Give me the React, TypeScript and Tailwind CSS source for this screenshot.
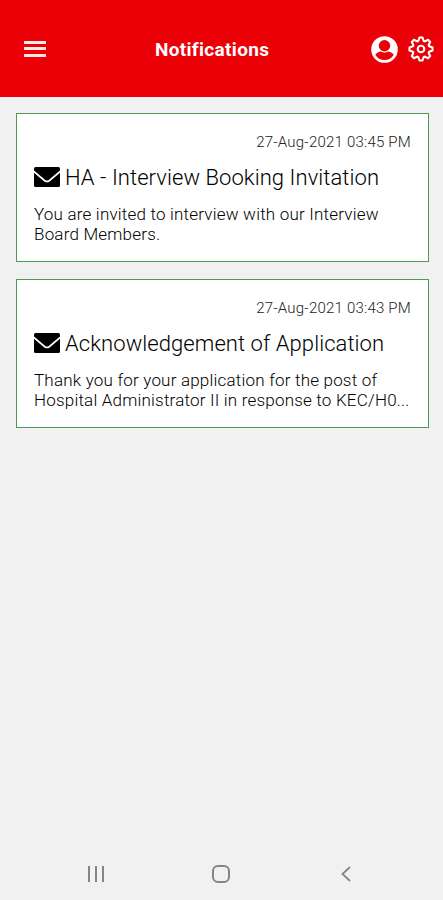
import React from 'react';

const NOTIFICATIONS = [
  {
    id: 1,
    date: '27-Aug-2021 03:45 PM',
    title: 'HA - Interview Booking Invitation',
    lines: ['You are invited to interview with our Interview', 'Board Members.'],
  },
  {
    id: 2,
    date: '27-Aug-2021 03:43 PM',
    title: 'Acknowledgement of Application',
    lines: ['Thank you for your application for the post of', 'Hospital Administrator II in response to KEC/H0...'],
  },
];

const TEETH = [0, 45, 90, 135, 180, 225, 270, 315];

const AccountIcon: React.FC = () => (
  <svg viewBox="0 0 27 27" className="h-[27px] w-[27px]">
    <circle cx="13.5" cy="13.5" r="13.3" fill="#fff" />
    <circle cx="13.5" cy="9.8" r="5.7" fill="#ec0008" />
    <path d="M4.2 18.8C6.2 16.3 8.2 15.6 10 15.5 12 17 15 17 17 15.5 18.8 15.6 20.8 16.3 22.8 18.8 20.7 22.2 17.4 24.1 13.5 24.1S6.3 22.2 4.2 18.8Z" fill="#ec0008" />
  </svg>
);

const GearIcon: React.FC = () => (
  <svg viewBox="-13 -13 26 26" className="h-[26px] w-[26px]" fill="none" stroke="#fff" strokeWidth="2.1" strokeLinecap="round" strokeLinejoin="round">
    {TEETH.map((angle) => (
      <path key={angle} transform={`rotate(${angle})`} d="M-3.25-7.85-2.4-8.7-1.5-11.5H1.5L2.4-8.7 3.25-7.85" />
    ))}
    <circle r="3.3" />
  </svg>
);

const MailIcon: React.FC = () => (
  <svg viewBox="0 0 26 20" className="h-5 w-[26px] shrink-0">
    <rect width="26" height="20" rx="1.6" />
    <path d="M-.5 4.2 10.8 13.7Q13 15.2 15.2 13.7L26.5 4.2" fill="none" stroke="#fff" strokeWidth="1.7" />
  </svg>
);

const App: React.FC = () => {
  return (
    <div className="flex h-[900px] w-[443px] flex-col overflow-hidden bg-[#f1f1f1] font-['Roboto',sans-serif]">
      {/* Header */}
      <header className="grid h-[97px] shrink-0 grid-cols-[131px_1fr_auto] items-center bg-[#ec0008] pr-[9px] pl-6 text-white">
        <button aria-label="Menu" className="flex w-[22px] flex-col gap-[3.5px]">
          <span className="h-[3px] bg-[#ffe6e6]"></span>
          <span className="h-[3px] bg-[#ffe6e6]"></span>
          <span className="h-[3px] bg-[#ffe6e6]"></span>
        </button>
        <h1 className="pt-[3px] text-[19px] font-bold tracking-[0.32px]">Notifications</h1>
        <div className="flex items-center gap-[10px] pt-px">
          <AccountIcon />
          <GearIcon />
        </div>
      </header>

      {/* Notifications */}
      <main className="flex flex-1 flex-col gap-[17px] pt-4 pr-[14px] pl-4">
        {NOTIFICATIONS.map((item) => (
          <article key={item.id} className="h-[149px] shrink-0 border-[1.5px] border-[#4f9a52] bg-white px-[17px] pt-4">
            <p className="text-right text-[15px] leading-6 font-light tracking-[0.22px] text-[#222]">{item.date}</p>
            <div className="mt-[9px] flex h-7 items-center gap-[5px]">
              <MailIcon />
              <h2 className="text-[22px] font-light tracking-[0.07px] whitespace-nowrap">{item.title}</h2>
            </div>
            <p className="mt-[13px] text-[17px] leading-5 font-light tracking-[0.2px] whitespace-nowrap">
              {item.lines.map((line) => (
                <span key={line} className="block">{line}</span>
              ))}
            </p>
          </article>
        ))}
      </main>

      {/* System navigation */}
      <nav className="flex h-[52px] shrink-0 items-center justify-between pr-[92px] pl-[88px] text-[#858585]">
        <div className="flex gap-[5px]">
          <span className="h-4 w-[2px] bg-current"></span>
          <span className="h-4 w-[2px] bg-current"></span>
          <span className="h-4 w-[2px] bg-current"></span>
        </div>
        <div className="ml-[-3px] h-[18px] w-[18px] rounded-[6px] border-2 border-current"></div>
        <svg viewBox="0 0 10 16" className="h-4 w-[10px]" fill="none" stroke="currentColor" strokeWidth="1.8">
          <path d="M9 1 1.5 8 9 15" />
        </svg>
      </nav>
    </div>
  );
};

export default App;
